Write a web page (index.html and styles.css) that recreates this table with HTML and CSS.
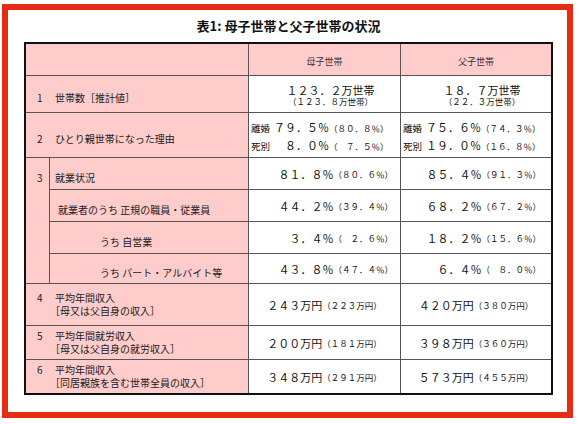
FILE: index.html
```html
<!DOCTYPE html>
<html lang="ja">
<head>
<meta charset="utf-8">
<title>表1: 母子世帯と父子世帯の状況</title>
<link rel="stylesheet" href="styles.css">
</head>
<body>
<div class="frame">
  <h1 class="title">表1: 母子世帯と父子世帯の状況</h1>
  <div class="tbl">
    <div class="c lab s2"></div>
    <div class="c hd">母子世帯</div>
    <div class="c hd">父子世帯</div>

    <div class="c lab s2 l1"><span class="n">1</span>世帯数［推計値］</div>
    <div class="c v two"><div class="m1">１２３．２万世帯</div><div class="p m2">（１２３．８万世帯）</div></div>
    <div class="c v two"><div class="m1">１８．７万世帯</div><div class="p m2">（２２．３万世帯）</div></div>

    <div class="c lab s2 l1"><span class="n">2</span>ひとり親世帯になった理由</div>
    <div class="c v rs">
      <div><span class="k">離婚</span>７９．５％<span class="p">（８０．８％）</span></div>
      <div><span class="k">死別</span>　８．０％<span class="p">（　７．５％）</span></div>
    </div>
    <div class="c v rs">
      <div><span class="k">離婚</span>７５．６％<span class="p">（７４．３％）</span></div>
      <div><span class="k">死別</span>１９．０％<span class="p">（１６．８％）</span></div>
    </div>

    <div class="c lab grp"><div class="grpn">3</div></div>
    <div class="c lab l1 in5">就業状況</div>
    <div class="c v r1">８１．８％<span class="p">（８０．６％）</span></div>
    <div class="c v r2">８５．４％<span class="p">（９１．３％）</span></div>

    <div class="c lab l1 in8">就業者のうち 正規の職員・従業員</div>
    <div class="c v r1">４４．２％<span class="p">（３９．４％）</span></div>
    <div class="c v r2">６８．２％<span class="p">（６７．２％）</span></div>

    <div class="c lab l1 in50">うち 自営業</div>
    <div class="c v r1">３．４％<span class="p">（　２．６％）</span></div>
    <div class="c v r2">１８．２％<span class="p">（１５．６％）</span></div>

    <div class="c lab l1 in50">うち パート・アルバイト等</div>
    <div class="c v r1">４３．８％<span class="p">（４７．４％）</span></div>
    <div class="c v r2">６．４％<span class="p">（　８．０％）</span></div>

    <div class="c lab s2 l2"><div><span class="n">4</span>平均年間収入</div><div class="ind">［母又は父自身の収入］</div></div>
    <div class="c v ctr">２４３万円<span class="p">（２２３万円）</span></div>
    <div class="c v ctr">４２０万円<span class="p">（３８０万円）</span></div>

    <div class="c lab s2 l2"><div><span class="n">5</span>平均年間就労収入</div><div class="ind">［母又は父自身の就労収入］</div></div>
    <div class="c v ctr">２００万円<span class="p">（１８１万円）</span></div>
    <div class="c v ctr">３９８万円<span class="p">（３６０万円）</span></div>

    <div class="c lab s2 l2"><div><span class="n">6</span>平均年間収入</div><div class="ind">［同居親族を含む世帯全員の収入］</div></div>
    <div class="c v ctr">３４８万円<span class="p">（２９１万円）</span></div>
    <div class="c v ctr">５７３万円<span class="p">（４５５万円）</span></div>
  </div>
</div>
</body>
</html>
```
FILE: styles.css
```css
body {
  margin: 0;
  background: #fff;
  font-family: "Noto Sans CJK JP", "Noto Sans", sans-serif;
  color: #222;
}

.frame {
  box-sizing: border-box;
  width: 571px;
  height: 414px;
  margin: 4px 0 0 2px;
  border: 6px solid #e52b12;
  padding: 8px 0 0 16px;
}

.title {
  width: 529px;
  margin: 0 0 8px;
  font-size: 13px;
  line-height: 16px;
  font-weight: bold;
  text-align: center;
  color: #111;
}

.tbl {
  display: grid;
  box-sizing: border-box;
  width: 529px;
  grid-template-columns: 23px 198px 151px 150px;
  grid-template-rows: 31px 36px 44px 31px 31px 31px 29px 41px 33px 33px;
  gap: 1px;
  background: #555;
  border: 2px solid #111;
}

.c {
  box-sizing: border-box;
  background: #fff;
  display: flex;
  align-items: center;
  white-space: nowrap;
}

.s2 {
  grid-column: span 2;
}

.lab {
  background: #ffcccc;
  font-size: 10px;
  line-height: 12.5px;
  padding-left: 11px;
  color: #222;
}

.hd {
  background: #ffcccc;
  justify-content: center;
  font-size: 9px;
  padding-top: 3px;
  color: #333;
}

.n {
  display: inline-block;
  width: 18px;
}

.l1 {
  padding-top: 9px;
}

.l2 {
  flex-direction: column;
  align-items: flex-start;
  justify-content: center;
}

.ind {
  padding-left: 13px;
}

.grp {
  grid-row: 4 / span 4;
  grid-column: 1;
  align-items: flex-start;
}

.grpn {
  box-sizing: border-box;
  height: 31px;
  padding-top: 9px;
  display: flex;
  align-items: center;
}

.in5 {
  padding-left: 5px;
}

.in8 {
  padding-left: 8px;
}

.in50 {
  padding-left: 50px;
}

.v {
  font-size: 11px;
  color: #111;
}

.p {
  font-size: 8.5px;
}

.two {
  flex-direction: column;
  justify-content: center;
  padding: 2px 0 0 12px;
}

.m1 {
  line-height: 12.5px;
}

.m2 {
  line-height: 10px;
}

.rs {
  flex-direction: column;
  align-items: flex-start;
  justify-content: center;
  line-height: 17.5px;
  padding: 4px 0 0 2px;
}

.k {
  font-size: 9.5px;
  margin-right: 4px;
}

.r1 {
  justify-content: flex-end;
  padding-right: 7px;
}

.r2 {
  justify-content: flex-end;
  padding-right: 10px;
}

.ctr {
  justify-content: center;
}
```
